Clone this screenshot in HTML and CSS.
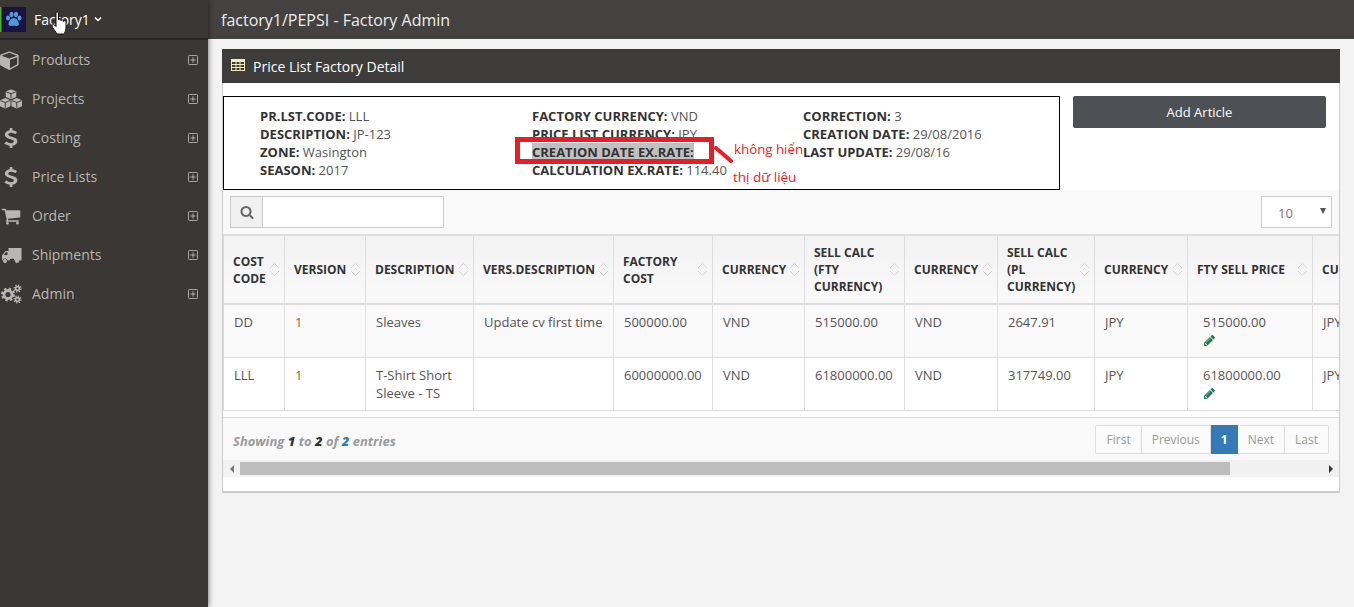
FILE: index.html
```html
<!DOCTYPE html>
<html lang="en">
<head>
    <meta charset="UTF-8">
    <title>factory1/PEPSI - Factory Admin</title>
    <link rel="stylesheet" href="styles.css">
</head>
<body>
    <svg class="sprites">
        <symbol id="i-plus" viewBox="0 0 11 11"><path d="M1.500.5h8a1 1 0 0 1 1 1v8a1 1 0 0 1-1 1h-8a1 1 0 0 1-1-1v-8a1 1 0 0 1 1-1zM5.500 2.500v6M2.500 5.500h6" fill="none" stroke="currentColor"/></symbol>
        <symbol id="i-sort" viewBox="0 0 11 15"><path d="M1 6l4.500-4.500L10 6M1 9l4.500 4.500L10 9" fill="none" stroke="#d4d4d4"/></symbol>
        <symbol id="i-pencil" viewBox="0 0 1792 1792"><path d="M491 1536l91-91-235-235-91 91v107h128v128h107zm523-928q0-22-22-22-10 0-17 7l-542 542q-7 7-7 17 0 22 22 22 10 0 17-7l542-542q7-7 7-17zm-54-192l416 416-832 832h-416v-416zm683 96q0 53-37 90l-166 166-416-416 166-165q36-38 90-38 53 0 91 38l235 234q37 39 37 91z"/></symbol>
        <symbol id="i-dollar" viewBox="100 0 1600 1792" preserveAspectRatio="none"><path d="M1362 1185q0 153-99.500 263.500t-258.500 136.500v175q0 14-9 23t-23 9h-135q-13 0-22.500-9.500t-9.500-22.500v-175q-66-9-127.500-31t-101.500-44.500-74-48-46.500-37.500-17.500-18q-17-21-2-41l103-135q7-10 23-12 15-2 24 9l2 2q113 99 243 125 37 8 74 8 81 0 142.500-43t61.500-122q0-28-15-53t-33.500-42-58.500-37.500-66-32-80-32.500q-39-16-61.500-25t-61.500-26.500-62.500-31-56.500-35.500-53.500-42.500-43.500-49-35.500-58-21-66.500-8.500-78q0-138 98-242t255-134v-180q0-13 9.500-22.500t22.500-9.500h135q14 0 23 9t9 23v176q57 6 110.500 23t87 33.500 63.500 37.500 39 29 15 14q17 18 5 38l-81 146q-8 15-23 16-14 3-27-7-3-3-14.500-12t-39-26.500-58.500-32-74.500-26-85.500-11.500q-95 0-155 43t-60 111q0 26 8.500 48t29.500 41.500 39.500 33 56 31 60.500 27 70 27.500q53 20 81 31.500t76 35 75.500 42.500 62 50 53 63.500 31.500 76.500 13 94z"/></symbol>
    </svg>

    <aside class="sidebar">
        <div class="brand">
            <svg class="logo" viewBox="0 0 26 25">
                <rect width="26" height="25" fill="#1b1340"/>
                <rect width="1.500" height="25" fill="#4caf2f"/>
                <g fill="#4f9bd8">
                    <ellipse cx="8" cy="11" rx="2" ry="2.600"/>
                    <ellipse cx="11.500" cy="7.500" rx="2" ry="2.800"/>
                    <ellipse cx="16" cy="7.500" rx="2" ry="2.800"/>
                    <ellipse cx="19.500" cy="11" rx="2" ry="2.600"/>
                    <path d="M13.700 11c3 0 5.300 4 5.300 6 0 2.500-3 1.800-5.300 1.800S8.500 19.500 8.500 17c0-2 2.200-6 5.200-6z"/>
                </g>
            </svg>
            <span class="brand-name">Factory1</span>
            <svg class="chevron" viewBox="0 0 8 6"><path d="M1 1.500l3 3 3-3" fill="none" stroke="#fff" stroke-width="1.500"/></svg>
        </div>
        <nav>
            <a class="nav-item">
                <svg class="nav-icon" viewBox="0 0 1792 1792" preserveAspectRatio="xMinYMid"><path d="M896 1629l640-349v-636l-640 233v752zm-64-865l698-254-698-254-698 254zm832-252v768q0 35-18 65t-49 47l-704 384q-28 16-61 16t-61-16l-704-384q-31-17-49-47t-18-65v-768q0-40 23-73t61-47l704-256q22-8 44-8t44 8l704 256q38 14 61 47t23 73z"/></svg>
                <span>Products</span>
                <svg class="plus"><use href="#i-plus"/></svg>
            </a>
            <a class="nav-item">
                <svg class="nav-icon" viewBox="0 0 23 20"><path d="M11.500 0L17 2v6l-5.500 2.300L6 8V2zM5.500 9l5.500 2.200v6.300L5.500 20 0 17.500v-6.300zM17.500 9l5.500 2.200v6.300L17.500 20 12 17.500v-6.300z"/><path d="M6.500 2.500l5 2 5-2M.5 11.700l5 2 5-2M12.500 11.700l5 2 5-2M11.500 4.500v5M5.500 13.700v5.500M17.500 13.700v5.500" fill="none" stroke="#3a3734"/></svg>
                <span>Projects</span>
                <svg class="plus"><use href="#i-plus"/></svg>
            </a>
            <a class="nav-item">
                <svg class="nav-icon"><use href="#i-dollar"/></svg>
                <span>Costing</span>
                <svg class="plus"><use href="#i-plus"/></svg>
            </a>
            <a class="nav-item">
                <svg class="nav-icon"><use href="#i-dollar"/></svg>
                <span>Price Lists</span>
                <svg class="plus"><use href="#i-plus"/></svg>
            </a>
            <a class="nav-item">
                <svg class="nav-icon" viewBox="0 0 1792 1792" preserveAspectRatio="xMidYMid"><path d="M704 1536q0 52-38 90t-90 38-90-38-38-90 38-90 90-38 90 38 38 90zm896 0q0 52-38 90t-90 38-90-38-38-90 38-90 90-38 90 38 38 90zm128-1088v512q0 24-16.500 42.500t-40.500 21.500l-1044 122q13 60 13 70 0 16-24 64h920q26 0 45 19t19 45-19 45-45 19h-1024q-26 0-45-19t-19-45q0-11 8-31.500t16-36 21.500-40 15.500-29.500l-177-823h-204q-26 0-45-19t-19-45 19-45 45-19h256q16 0 28.500 6.500t19.500 15.500 13 24.500 8 26 5.500 29.500 4.500 26h1201q26 0 45 19t19 45z"/></svg>
                <span>Order</span>
                <svg class="plus"><use href="#i-plus"/></svg>
            </a>
            <a class="nav-item">
                <svg class="nav-icon" viewBox="0 0 22 20"><path fill-rule="evenodd" d="M8.500 3h13v12.500h-6.800a2.800 2.800 0 0 0-5.400 0H7.700a2.800 2.800 0 0 0-5.400 0H2v-5l3.500-4.500h3zM3.800 10H7.500V7.300H5.800z"/><circle cx="5" cy="16" r="2"/><circle cx="17" cy="16" r="2"/></svg>
                <span>Shipments</span>
                <svg class="plus"><use href="#i-plus"/></svg>
            </a>
            <a class="nav-item">
                <svg class="nav-icon" viewBox="0 0 22 20">
                    <g fill="none" stroke="currentColor">
                        <circle cx="8" cy="10.500" r="4" stroke-width="2.800"/>
                        <circle cx="8" cy="10.500" r="6" stroke-width="2" stroke-dasharray="2.400 2.310"/>
                        <circle cx="17.500" cy="4.500" r="1.900" stroke-width="1.600"/>
                        <circle cx="17.500" cy="4.500" r="3.400" stroke-width="1.300" stroke-dasharray="1.300 1.370"/>
                        <circle cx="17.500" cy="15.500" r="1.900" stroke-width="1.600"/>
                        <circle cx="17.500" cy="15.500" r="3.400" stroke-width="1.300" stroke-dasharray="1.300 1.370"/>
                    </g>
                </svg>
                <span>Admin</span>
                <svg class="plus"><use href="#i-plus"/></svg>
            </a>
        </nav>
        <svg class="hand" viewBox="0 0 18 24"><path d="M5 2c0-1.500 2.500-1.500 2.500 0v7c0-1.200 2.500-1.200 2.500 0v.8c0-1.200 2.500-1.200 2.500 0v.8c0-1.200 2.500-1.200 2.500 0V17c0 3-1.500 5.500-2.500 6H6c-1-2-4.500-6-5-8-.4-1.600 1.500-2 2.500-1L5 15.500z" fill="#fff" stroke="#111" stroke-width="1"/></svg>
    </aside>

    <div class="main">
        <header class="topbar">factory1/PEPSI - Factory Admin</header>
        <div class="content">
            <section class="panel">
                <h2 class="panel-title">
                    <svg class="title-icon" viewBox="0 0 14 12"><path fill-rule="evenodd" d="M0 0h14v12H0zM1 3v2h3.500V3zm4.500 0v2h3V3zm4 0v2H13V3zM1 6v2h3.500V6zm4.500 0v2h3V6zm4 0v2H13V6zM1 9v2h3.500V9zm4.500 0v2h3V9zm4 0v2H13V9z" fill="#f6e9b8"/></svg>
                    Price List Factory Detail
                </h2>

                <div class="summary">
                    <div class="info-box">
                        <div class="info-col">
                            <div><b>PR.LST.CODE:</b> LLL</div>
                            <div><b>DESCRIPTION:</b> JP-123</div>
                            <div><b>ZONE:</b> Wasington</div>
                            <div><b>SEASON:</b> 2017</div>
                        </div>
                        <div class="info-col">
                            <div><b>FACTORY CURRENCY:</b> VND</div>
                            <div><b>PRICE LIST CURRENCY:</b> JPY</div>
                            <div><b class="selected">CREATION DATE EX.RATE:</b></div>
                            <div><b>CALCULATION EX.RATE:</b> 114.40</div>
                        </div>
                        <div class="info-col">
                            <div><b>CORRECTION:</b> 3</div>
                            <div><b>CREATION DATE:</b> 29/08/2016</div>
                            <div><b>LAST UPDATE:</b> 29/08/16</div>
                        </div>
                    </div>
                    <button class="add-btn">Add Article</button>
                    <div class="mark-box"></div>
                    <svg class="mark-line" viewBox="0 0 20 18"><path d="M2 2l15 13" stroke="#ed1c24" stroke-width="4" stroke-linecap="round"/></svg>
                    <span class="mark-text mark-one">không hiển</span>
                    <span class="mark-text mark-two">thị dữ liệu</span>
                </div>

                <div class="toolbar">
                    <div class="search">
                        <span class="search-addon">
                            <svg viewBox="0 0 1792 1792"><path d="M1216 832q0-185-131.500-316.500t-316.500-131.500-316.500 131.500-131.500 316.500 131.500 316.500 316.500 131.500 316.500-131.500 131.500-316.500zm512 832q0 52-38 90t-90 38q-54 0-90-38l-343-342q-179 124-399 124-143 0-273.500-55.500t-225-150-150-225-55.500-273.500 55.500-273.500 150-225 225-150 273.500-55.500 273.500 55.500 225 150 150 225 55.500 273.500q0 220-124 399l343 343q37 37 37 90z"/></svg>
                        </span>
                        <input class="search-input" type="text">
                    </div>
                    <div class="page-size">10<span class="caret"></span></div>
                </div>

                <div class="table-wrap">
                    <table class="grid">
                        <colgroup>
                            <col class="c1"><col class="c2"><col class="c3"><col class="c4"><col class="c5"><col class="c6">
                            <col class="c7"><col class="c8"><col class="c9"><col class="c10"><col class="c11"><col class="c12">
                        </colgroup>
                        <thead>
                            <tr>
                                <th><div class="th-in"><span>COST CODE</span><svg class="sort"><use href="#i-sort"/></svg></div></th>
                                <th><div class="th-in"><span>VERSION</span><svg class="sort"><use href="#i-sort"/></svg></div></th>
                                <th><div class="th-in"><span>DESCRIPTION</span><svg class="sort"><use href="#i-sort"/></svg></div></th>
                                <th><div class="th-in"><span>VERS.DESCRIPTION</span><svg class="sort"><use href="#i-sort"/></svg></div></th>
                                <th><div class="th-in"><span>FACTORY COST</span><svg class="sort"><use href="#i-sort"/></svg></div></th>
                                <th><div class="th-in"><span>CURRENCY</span><svg class="sort"><use href="#i-sort"/></svg></div></th>
                                <th><div class="th-in"><span>SELL CALC (FTY CURRENCY)</span><svg class="sort"><use href="#i-sort"/></svg></div></th>
                                <th><div class="th-in"><span>CURRENCY</span><svg class="sort"><use href="#i-sort"/></svg></div></th>
                                <th><div class="th-in"><span>SELL CALC (PL CURRENCY)</span><svg class="sort"><use href="#i-sort"/></svg></div></th>
                                <th><div class="th-in"><span>CURRENCY</span><svg class="sort"><use href="#i-sort"/></svg></div></th>
                                <th><div class="th-in"><span>FTY SELL PRICE</span><svg class="sort"><use href="#i-sort"/></svg></div></th>
                                <th><div class="th-in"><span>CURRENCY</span></div></th>
                            </tr>
                        </thead>
                        <tbody>
                            <tr class="odd">
                                <td>DD</td><td class="ver">1</td><td>Sleaves</td><td>Update cv first time</td><td>500000.00</td><td>VND</td>
                                <td>515000.00</td><td>VND</td><td>2647.91</td><td>JPY</td>
                                <td class="price">515000.00<svg class="pencil"><use href="#i-pencil"/></svg></td>
                                <td>JPY</td>
                            </tr>
                            <tr>
                                <td>LLL</td><td class="ver">1</td><td>T-Shirt Short Sleeve - TS</td><td></td><td>60000000.00</td><td>VND</td>
                                <td>61800000.00</td><td>VND</td><td>317749.00</td><td>JPY</td>
                                <td class="price">61800000.00<svg class="pencil"><use href="#i-pencil"/></svg></td>
                                <td>JPY</td>
                            </tr>
                        </tbody>
                    </table>
                </div>

                <div class="table-foot">
                    <div class="showing">Showing <b>1</b> to <b>2</b> of <b class="total">2</b> entries</div>
                    <div class="pager">
                        <a class="first">First</a><a>Previous</a><a class="on">1</a><a>Next</a><a>Last</a>
                    </div>
                </div>

                <div class="hscroll">
                    <span class="arrow-l"></span>
                    <div class="track"><div class="thumb"></div></div>
                    <span class="arrow-r"></span>
                </div>
            </section>
        </div>
    </div>
</body>
</html>
```

FILE: styles.css
```css
html, body {
    height: 100%;
}
body {
    margin: 0;
    display: flex;
    overflow: hidden;
    font-family: "Open Sans", "Liberation Sans", sans-serif;
    font-size: 13px;
    color: #555;
    background-color: #f3f3f3;
}
.sprites {
    display: none;
}

/* sidebar */
.sidebar {
    position: relative;
    z-index: 2;
    width: 208px;
    flex: none;
    background-color: #3a3734;
    box-shadow: 1px 0 5px rgba(0, 0, 0, 0.45);
}
.brand {
    display: flex;
    align-items: center;
    height: 38px;
    border-bottom: 2px solid #2a2826;
    color: #fff;
    font-size: 14px;
}
.logo {
    width: 26px;
    height: 25px;
}
.brand-name {
    margin-left: 8px;
}
.chevron {
    width: 8px;
    height: 6px;
    margin-left: 4px;
}
.nav-item {
    display: flex;
    align-items: center;
    height: 39px;
    color: #b9b6b1;
    font-size: 14px;
}
.nav-icon {
    width: 22px;
    height: 20px;
    margin-right: 10px;
    flex: none;
    fill: currentColor;
}
.nav-item span {
    flex: 1;
}
.plus {
    width: 10px;
    height: 10px;
    margin-right: 10px;
}
.hand {
    position: absolute;
    left: 51px;
    top: 11px;
    width: 18px;
    height: 24px;
}

/* main area */
.main {
    flex: 1;
    min-width: 0;
}
.topbar {
    height: 39px;
    line-height: 40px;
    padding-left: 13px;
    background-color: #434240;
    color: #eee;
    font-size: 16px;
}
.content {
    padding: 10px 14px 0;
}
.panel {
    background-color: #fff;
    border: 1px solid #ccc;
    border-top: 0;
    border-bottom-width: 2px;
}
.panel-title {
    display: flex;
    align-items: center;
    height: 34px;
    margin: 0 -1px;
    padding-left: 9px;
    background-color: #3e3d3c;
    color: #fff;
    font-size: 14px;
    font-weight: 400;
}
.title-icon {
    width: 14px;
    height: 12px;
    margin-right: 8px;
    margin-top: -3px;
}

/* info block */
.summary {
    position: relative;
    display: flex;
    align-items: flex-start;
    height: 107px;
    padding-top: 13px;
    box-sizing: border-box;
}
.info-box {
    display: grid;
    grid-template-columns: 272px 271px 1fr;
    box-sizing: border-box;
    width: 837px;
    height: 94px;
    padding: 10px 0 0 36px;
    border: 1px solid #000;
    line-height: 18px;
    color: #555;
}
.info-box b {
    color: #333;
    font-weight: 700;
}
.info-box .selected {
    background-color: #c0c0c0;
}
.add-btn {
    width: 253px;
    height: 32px;
    margin-left: 13px;
    border: 0;
    border-radius: 2px;
    background-color: #4d5055;
    color: #fff;
    font-family: inherit;
    font-size: 13px;
}
.mark-box {
    position: absolute;
    left: 292px;
    top: 54px;
    width: 199px;
    height: 27px;
    box-sizing: border-box;
    border: 5px solid #ed1c24;
}
.mark-line {
    position: absolute;
    left: 491px;
    top: 63px;
    width: 20px;
    height: 18px;
}
.mark-text {
    position: absolute;
    color: #ed1c24;
    line-height: 18px;
    white-space: nowrap;
}
.mark-one {
    left: 511px;
    top: 57px;
    font-size: 13.300px;
}
.mark-two {
    left: 510px;
    top: 85px;
    font-size: 13.500px;
}

/* search + page size */
.toolbar {
    display: flex;
    justify-content: space-between;
    align-items: flex-start;
    height: 44px;
    box-sizing: border-box;
    padding: 6px 7px 0;
    background-color: #f9f9f9;
}
.search {
    display: flex;
    height: 32px;
    width: 214px;
}
.search-addon {
    display: flex;
    align-items: center;
    justify-content: center;
    width: 32px;
    box-sizing: border-box;
    border: 1px solid #ccc;
    border-right: 0;
    background-color: #f0f0f0;
}
.search-addon svg {
    width: 14px;
    height: 14px;
    fill: #666;
}
.search-input {
    flex: 1;
    min-width: 0;
    margin: 0;
    padding: 0 6px;
    border: 1px solid #ccc;
    background-color: #fff;
    box-sizing: border-box;
}
.page-size {
    position: relative;
    width: 71px;
    height: 32px;
    box-sizing: border-box;
    padding-left: 16px;
    border: 1px solid #ccc;
    background-color: #fff;
    color: #777;
    line-height: 33px;
}
.caret {
    position: absolute;
    right: 5px;
    top: 11px;
    border-left: 3.500px solid transparent;
    border-right: 3.500px solid transparent;
    border-top: 6px solid #555;
}

/* table */
.table-wrap {
    overflow: hidden;
    border-bottom: 1px solid #ddd;
    padding-bottom: 6px;
    background-color: #fff;
}
.grid {
    table-layout: fixed;
    width: 1169px;
    border-collapse: collapse;
}
.c1 { width: 61px; }
.c2 { width: 81px; }
.c3 { width: 108px; }
.c4 { width: 140px; }
.c5 { width: 99px; }
.c6 { width: 92px; }
.c7 { width: 100px; }
.c8 { width: 93px; }
.c9 { width: 97px; }
.c10 { width: 93px; }
.c11 { width: 125px; }
.c12 { width: 80px; }
.grid th, .grid td {
    border: 1px solid #ddd;
}
.grid th {
    padding: 8px 4px 8px 9px;
    border-top: 2px solid #ddd;
    border-bottom: 2px solid #ddd;
    background: linear-gradient(#f2f2f2, #f9f9f9);
    color: #333;
    font-size: 12px;
    font-weight: 700;
    line-height: 17px;
    text-align: left;
    vertical-align: middle;
}
.th-in {
    display: flex;
    align-items: center;
    justify-content: space-between;
}
.sort {
    width: 11px;
    height: 15px;
    flex: none;
}
.grid td {
    padding: 8px 10px;
    line-height: 18px;
    vertical-align: top;
    color: #555;
}
.grid .odd td {
    background-color: #f9f9f9;
}
.grid .ver {
    color: #8a6d3b;
}
.grid .price {
    padding-left: 15px;
}
.pencil {
    display: block;
    width: 13px;
    height: 13px;
    margin: 3px 0 2px;
    fill: #1f7a55;
}

/* footer of the table */
.table-foot {
    display: flex;
    justify-content: space-between;
    align-items: center;
    height: 42px;
    box-sizing: border-box;
    padding: 0 10px;
    background-color: #f9f9f9;
}
.showing {
    margin-top: 3px;
    color: #999;
    font-style: italic;
    font-weight: 700;
}
.showing b {
    color: #333;
}
.showing .total {
    color: #337ab7;
}
.pager {
    display: flex;
    height: 29px;
    border: 1px solid #ddd;
    border-radius: 2px;
    box-sizing: border-box;
    font-size: 12px;
    color: #999;
    background-color: #fbfbfb;
}
.pager a {
    padding: 0 10px;
    line-height: 28px;
    border-right: 1px solid #ddd;
}
.pager .first {
    padding-left: 11px;
}
.pager a:last-child {
    border-right: 0;
}
.pager .on {
    margin: -1px 0;
    line-height: 29px;
    background-color: #337ab7;
    border-right: 0;
    color: #fff;
    font-weight: 700;
}

/* scrollbar under the table */
.hscroll {
    display: flex;
    align-items: center;
    height: 17px;
    margin-bottom: 14px;
    background-color: #f1f1f1;
}
.arrow-l, .arrow-r {
    width: 17px;
    display: flex;
    justify-content: center;
}
.arrow-l::before {
    content: "";
    border-top: 4px solid transparent;
    border-bottom: 4px solid transparent;
    border-right: 4px solid #777;
}
.arrow-r::before {
    content: "";
    border-top: 4px solid transparent;
    border-bottom: 4px solid transparent;
    border-left: 4px solid #333;
}
.track {
    flex: 1;
    height: 13px;
}
.thumb {
    width: 91.500%;
    height: 13px;
    background-color: #bdbdbd;
}
```
